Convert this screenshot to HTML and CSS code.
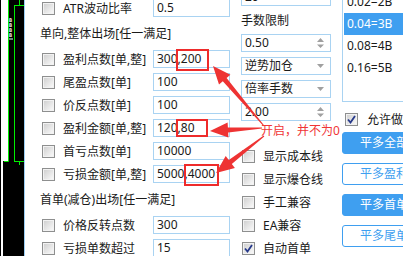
FILE: index.html
```html
<!DOCTYPE html>
<html lang="zh-CN">
<head>
    <meta charset="UTF-8">
    <title>EA 参数</title>
    <link rel="stylesheet" href="styles.css">
</head>
<body>
    <!-- chart strip behind the panel -->
    <div id="chart">
        <svg width="24" height="256" viewBox="0 0 24 256">
            <rect x="0" y="0" width="24" height="256" fill="#000"/>
            <rect x="1" y="0" width="7" height="161" fill="#fff"/>
            <rect x="1" y="161" width="2" height="95" fill="#fff"/>
            <path d="M8.5 0 V161.5 H4" stroke="#00ee00" fill="none"/>
            <rect x="14.5" y="5.5" width="12" height="156" stroke="#00ee00" fill="none"/>
            <path d="M19.5 0 V5 M19.5 162 V165" stroke="#00ee00"/>
            <text class="tag" x="9" y="22">B</text>
            <text class="tag" x="9" y="27">B</text>
            <text class="tag" x="9" y="32">B</text>
            <text class="tag" x="9" y="37">B</text>
            <rect x="9" y="38" width="4" height="2" fill="#6a8a7a"/>
        </svg>
    </div>

    <div id="panel">
        <div class="col col-left">
            <div class="row"><span class="cb"></span><span class="label">ATR波动比率</span><div class="field">0.5</div></div>
            <div class="group-title">单向,整体出场[任一满足]</div>
            <div class="row"><span class="cb"></span><span class="label">盈利点数[单,整]</span><div class="field">300,200</div></div>
            <div class="row"><span class="cb"></span><span class="label">尾盈点数[单]</span><div class="field">100</div></div>
            <div class="row"><span class="cb"></span><span class="label">价反点数[单]</span><div class="field">100</div></div>
            <div class="row"><span class="cb"></span><span class="label">盈利金额[单,整]</span><div class="field">120,80</div></div>
            <div class="row"><span class="cb"></span><span class="label">首亏点数[单]</span><div class="field">10000</div></div>
            <div class="row"><span class="cb"></span><span class="label">亏损金额[单,整]</span><div class="field">5000,4000</div></div>
            <div class="group-title">首单(减仓)出场[任一满足]</div>
            <div class="row"><span class="cb"></span><span class="label">价格反转点数</span><div class="field">300</div></div>
            <div class="row"><span class="cb"></span><span class="label">亏损单数超过</span><div class="field">15</div></div>
        </div>

        <div class="col col-mid">
            <div class="row"><div class="field wide">20<svg class="drop" width="7" height="4"><path d="M0 0 L7 0 L3.5 4Z"/></svg></div></div>
            <div class="row"><span class="plain">手数限制</span></div>
            <div class="row"><div class="field wide">0.50<svg class="spin" width="7" height="12"><path d="M0 5 L3.5 1 L7 5Z M0 7.5 L3.5 11 L7 7.5Z"/></svg></div></div>
            <div class="row"><div class="field wide">逆势加仓<svg class="drop" width="7" height="4"><path d="M0 0 L7 0 L3.5 4Z"/></svg></div></div>
            <div class="row"><div class="field wide">倍率手数<svg class="drop" width="7" height="4"><path d="M0 0 L7 0 L3.5 4Z"/></svg></div></div>
            <div class="row"><div class="field wide">2.00<svg class="spin" width="7" height="12"><path d="M0 5 L3.5 1 L7 5Z M0 7.5 L3.5 11 L7 7.5Z"/></svg></div></div>
            <div class="spacer"></div>
            <div class="row"><span class="cb"></span><span class="plain">显示成本线</span></div>
            <div class="row"><span class="cb"></span><span class="plain">显示爆仓线</span></div>
            <div class="row"><span class="cb"></span><span class="plain">手工兼容</span></div>
            <div class="row"><span class="cb"></span><span class="plain">EA兼容</span></div>
            <div class="row"><span class="cb checked"><svg width="9" height="9" viewBox="0 0 9 9"><path d="M1 4.5 L3.5 7.5 L8 1"/></svg></span><span class="plain">自动首单</span></div>
        </div>

        <div class="col col-right">
            <div class="listbox">
                <div class="item">0.02=2B</div>
                <div class="item selected">0.04=3B</div>
                <div class="item">0.08=4B</div>
                <div class="item">0.16=5B</div>
            </div>
            <div class="row allow"><span class="cb checked"><svg width="9" height="9" viewBox="0 0 9 9"><path d="M1 4.5 L3.5 7.5 L8 1"/></svg></span><span class="plain">允许做多</span></div>
            <div class="btn solid">平多全部</div>
            <div class="btn">平多盈利</div>
            <div class="btn solid">平多首单</div>
            <div class="btn">平多尾单</div>
            <div class="btn">平多全部</div>
        </div>
    </div>

    <!-- red annotations drawn over the screenshot -->
    <div class="mark mark-1"></div>
    <div class="mark mark-2"></div>
    <div class="mark mark-3"></div>
    <svg id="arrows" width="403" height="256">
        <polygon points="264.4,125.7 226.6,78.1 230.4,74.8 213,66 219.0,84.6 222.8,81.3 263.6,126.3"/>
        <polygon points="262,128.5 228.2,132.5 228.4,137.5 210,131 227.6,122.5 227.9,127.5 262,127.5"/>
        <polygon points="264.3,136.4 231.8,164 234.9,167.9 216,173 225.7,156.1 228.8,160 263.7,135.6"/>
    </svg>
    <div class="note">开启，并不为0</div>
</body>
</html>
```

FILE: styles.css
```css
body {
    margin: 0;
    width: 403px;
    height: 256px;
    overflow: hidden;
    display: flex;
    position: relative;
    background: #fff;
    color: #1a1a1a;
    font-family: "Noto Sans", "Noto Sans CJK SC", sans-serif;
    font-size: 12px;
}
#chart {
    width: 24px;
    height: 256px;
    flex: none;
}
#chart svg {
    display: block;
}
.tag {
    fill: #fff;
    font-family: "DejaVu Sans Mono", monospace;
    font-size: 5px;
    font-weight: bold;
}
#panel {
    flex: 1;
    display: flex;
    gap: 11px;
    border-left: 1px solid #9ccff5;
    overflow: hidden;
}
.col {
    flex: none;
}
.col-left {
    width: 190px;
    padding-left: 15px;
    margin-top: -1px;
}
.col-mid {
    width: 90px;
    margin-top: -12px;
}
.col-right {
    width: 110px;
}
.row {
    display: flex;
    align-items: center;
    height: 18px;
    margin-bottom: 5px;
    white-space: nowrap;
}
.col-left .row {
    padding-left: 2px;
}
.group-title {
    height: 23px;
    line-height: 23px;
    margin-bottom: 5px;
    white-space: nowrap;
}
.label {
    width: 90px;
    margin-left: 8px;
}
.plain {
    margin-left: 8px;
}
.col-mid .row > .plain:first-child {
    margin-left: 0;
}
.field {
    width: 77px;
    height: 18px;
    box-sizing: border-box;
    border: 1px solid #a9d3f2;
    padding-left: 3px;
    line-height: 16px;
    display: flex;
    align-items: center;
    justify-content: space-between;
    padding-right: 6px;
}
.field.wide {
    width: 90px;
}
.field svg {
    fill: #a0a0a0;
}
.cb {
    flex: none;
    width: 13px;
    height: 13px;
    box-sizing: border-box;
    border: 1px solid #8e8f8f;
    background: linear-gradient(135deg, #cdcdcd 0%, #f5f5f5 85%);
    box-shadow: inset 0 0 0 1px #f2f2f2;
    display: flex;
    align-items: center;
    justify-content: center;
}
.cb svg path {
    fill: none;
    stroke: #26398a;
    stroke-width: 1.8;
}
.col-mid .cb {
    margin-left: 1px;
}
.spacer {
    height: 16px;
    margin-bottom: 5px;
}
.listbox {
    margin-top: -10px;
    height: 112px;
    box-sizing: border-box;
    border: 1px solid #a9d3f2;
    padding: 0 1px;
}
.item {
    height: 22px;
    line-height: 22px;
    padding-left: 3px;
}
.item.selected {
    background: #3f9ff0;
    color: #fff;
}
.allow {
    margin-top: 8px;
    margin-bottom: 4px;
    padding-left: 3px;
}
.allow .plain {
    margin-left: 9px;
}
.btn {
    height: 22px;
    box-sizing: border-box;
    border: 1px solid #3f9ff0;
    border-radius: 3px;
    margin-bottom: 9px;
    padding-left: 17px;
    line-height: 20px;
    color: #3f9ff0;
    white-space: nowrap;
}
.btn.solid {
    background: #3f9ff0;
    color: #fff;
}

/* annotations */
.mark {
    position: absolute;
    border: 2px solid #ee2b2b;
    box-sizing: border-box;
}
.mark-1 {
    left: 176px;
    top: 49px;
    width: 33px;
    height: 22px;
}
.mark-2 {
    left: 176px;
    top: 119px;
    width: 32px;
    height: 18px;
}
.mark-3 {
    left: 184px;
    top: 164px;
    width: 35px;
    height: 22px;
}
#arrows {
    position: absolute;
    left: 0;
    top: 0;
    fill: #ee3333;
    pointer-events: none;
}
.note {
    position: absolute;
    left: 261px;
    top: 123px;
    color: #f03535;
    line-height: 16px;
    white-space: nowrap;
}
```
